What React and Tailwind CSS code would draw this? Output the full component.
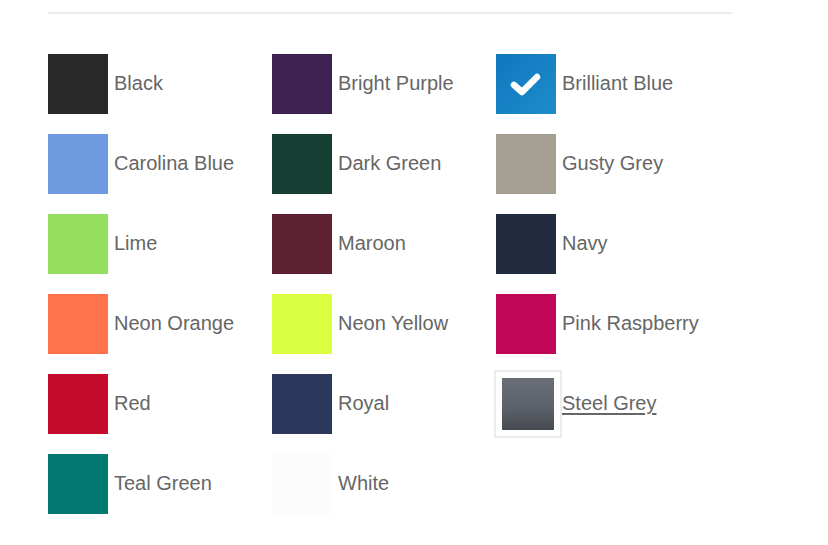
import React from "react";

const items = [
  ["Black", "#292929"], ["Bright Purple", "#3e2150"], ["Brilliant Blue", "#1580c4"],
  ["Carolina Blue", "#6e9bdf"], ["Dark Green", "#173e33"], ["Gusty Grey", "#a69f94"],
  ["Lime", "#93de5c"], ["Maroon", "#5e2132"], ["Navy", "#232b40"],
  ["Neon Orange", "#ff744d"], ["Neon Yellow", "#d9ff40"], ["Pink Raspberry", "#c20658"],
  ["Red", "#c50c2c"], ["Royal", "#2c375c"], ["Steel Grey", "#5d6169"],
  ["Teal Green", "#037a71"], ["White", "#fcfcfc"],
];

function Swatch({ name, color }) {
  if (name === "Steel Grey") {
    return (
      <div className="flex items-center h-[60px]">
        <div className="w-[68px] h-[68px] -ml-[2px] border-2 border-[#ececec] p-[6px] bg-white">
          <div className="w-full h-full" style={{ background: "linear-gradient(180deg,#6a6e76 0%,#5b5f67 60%,#474a51 100%)" }} />
        </div>
        <span className="mb-[2px] text-[20px] text-[#666] underline decoration-[2px] underline-offset-[3px]">{name}</span>
      </div>
    );
  }
  return (
    <div className="flex items-center h-[60px]">
      <div className="w-[60px] h-[60px] shrink-0 flex items-center justify-center" style={{ background: name === "Brilliant Blue" ? "linear-gradient(135deg,#0f78bd,#1d8ccc)" : color }}>
        {name === "Brilliant Blue" && (
          <svg width="36" height="30" viewBox="0 0 36 30">
            <path d="M6 16 L14 23 L29 8" fill="none" stroke="#fff" strokeWidth="6.5" strokeLinecap="round" strokeLinejoin="round" />
          </svg>
        )}
      </div>
      <span className="ml-[6px] mb-[2px] text-[20px] text-[#666]">{name}</span>
    </div>
  );
}

export default function App() {
  return (
    <div className="w-[828px] h-[545px] bg-white overflow-hidden" style={{ fontFamily: '"Liberation Sans", Arial, sans-serif' }}>
      <div className="pt-[12px] px-[48px]">
        <div className="w-[684px] h-[2px] bg-[#ebebeb]" />
        <div className="mt-[40px] grid grid-cols-[224px_224px_224px] gap-y-[20px]">
          {items.map(([n, c]) => <Swatch key={n} name={n} color={c} />)}
        </div>
      </div>
    </div>
  );
}
